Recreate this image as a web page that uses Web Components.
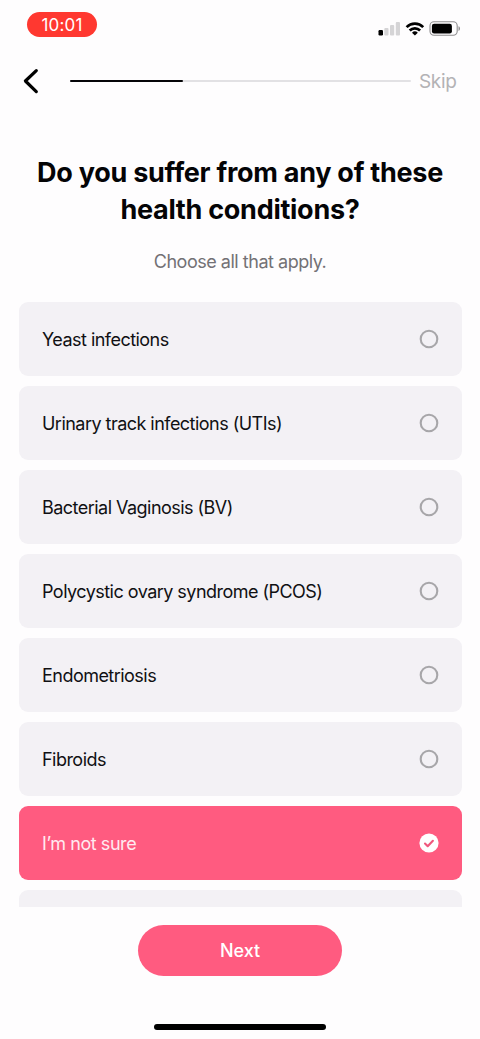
<!DOCTYPE html>
<html lang="en">
<head>
<meta charset="utf-8">
<title>Health conditions</title>
<style>
  html, body { margin: 0; height: 100%; background: #fefdfe; }
  body { font-family: Inter, "Liberation Sans", sans-serif; overflow: hidden; }
</style>
</head>
<body>
<quiz-screen></quiz-screen>
<script>
const define = (name, html) => {
  const template = document.createElement('template');
  template.innerHTML = html;
  customElements.define(name, class extends HTMLElement {
    connectedCallback() {
      if (this.shadowRoot) return;
      this.attachShadow({ mode: 'open' }).append(template.content.cloneNode(true));
    }
  });
};

define('status-bar', `
<style>
  :host { display: flex; justify-content: space-between; height: 56px; padding: 12px 19px 0 27px; box-sizing: border-box; }
  .time { width: 70px; height: 25px; border-radius: 13px; background: #ff3830; color: #fff;
    font-size: 17px; line-height: 26px; text-align: center; font-weight: 400; letter-spacing: 0.2px; }
  svg { display: block; margin-top: 8px; }
</style>
<div class="time">10:01</div>
<svg width="83" height="18" viewBox="378 20 83 18">
  <rect x="378.5" y="30" width="4.5" height="5.5" rx="1.2" fill="#000"/>
  <g fill="#d5d4d6">
    <rect x="384.3" y="28" width="4.2" height="7.5" rx="1"/>
    <rect x="390" y="25" width="4.2" height="10.5" rx="1"/>
    <rect x="395.8" y="22" width="4.2" height="13.5" rx="1"/>
  </g>
  <g fill="none" stroke="#000" stroke-width="2.7">
    <path d="M406.6 27.1a11.8 11.8 0 0 1 16.6 0"/>
    <path d="M409.7 30.5a7.4 7.4 0 0 1 10.4 0"/>
  </g>
  <path d="M414.9 35.6l-2.9-2.9a4.2 4.2 0 0 1 5.8 0z" fill="#000"/>
  <rect x="430" y="21.8" width="27.2" height="13.4" rx="4" fill="none" stroke="#8e8d8f" stroke-width="1.1"/>
  <rect x="431.9" y="23.7" width="20" height="9.8" rx="2.2" fill="#000"/>
  <path d="M458.5 26.3c2 .7 2 3.8 0 4.6z" fill="#8e8d8f"/>
</svg>`);

define('quiz-nav', `
<style>
  :host { display: flex; align-items: center; height: 50px; padding: 0 24px 0 22px; box-sizing: border-box; }
  svg { flex: none; width: 18px; height: 28px; }
  .track { flex: none; width: 341px; height: 2px; margin: 0 8.5px 0 29.5px; border-radius: 1px; background: #e2e1e4; }
  .fill { width: 113px; height: 2px; border-radius: 1px; background: #050508; }
  .skip { font-size: 19px; line-height: 24px; padding-top: 2px; color: #b3b2b5; letter-spacing: -0.35px; white-space: nowrap; }
</style>
<svg viewBox="0 0 18 28"><path d="M14.3 3.6L3.4 14l10.9 10.6" fill="none" stroke="#000" stroke-width="3.2" stroke-linecap="round" stroke-linejoin="round"/></svg>
<div class="track"><div class="fill"></div></div>
<span class="skip">Skip</span>`);

define('quiz-heading', `
<style>
  :host { display: block; height: 196px; padding-top: 48px; box-sizing: border-box; text-align: center; }
  h1 { margin: 0; font-size: 27px; line-height: 37px; font-weight: 700; color: #040406; letter-spacing: -0.27px; }
  p { margin: 22px 0 0; font-size: 18px; line-height: 24px; color: #737175; letter-spacing: -0.48px; }
  span { display: block; white-space: nowrap; }
</style>
<h1><span>Do you suffer from any of these</span><span>health conditions?</span></h1>
<p>Choose all that apply.</p>`);

define('choice-row', `
<style>
  :host { display: flex; flex: none; align-items: center; justify-content: space-between; height: 74px;
    padding: 0 22.5px 0 23.5px; box-sizing: border-box; border-radius: 9px; background: #f3f1f5; color: #101013;
    font-size: 18px; line-height: 24px; letter-spacing: -0.53px; }
  :host([selected]) { background: #ff5b80; color: #ffeaf0; letter-spacing: -0.44px; }
  span { white-space: nowrap; padding-top: 2px; }
  svg { display: block; width: 20px; height: 20px; }
  .on, :host([selected]) .off { display: none; }
  :host([selected]) .on { display: block; }
</style>
<span><slot></slot></span>
<svg class="off" viewBox="0 0 20 20"><circle cx="10" cy="10" r="8.3" fill="none" stroke="#a7a6a9" stroke-width="2.1"/></svg>
<svg class="on" viewBox="0 0 20 20"><circle cx="10" cy="10" r="9.6" fill="#fff"/><path d="M6 10.5l2.7 2.7 5.2-5.4" fill="none" stroke="#f0587d" stroke-width="2.1" stroke-linecap="round" stroke-linejoin="round"/></svg>`);

define('choice-list', `
<style>
  :host { display: flex; flex-direction: column; gap: 10px; height: 605px; padding: 0.3px 18.5px 0; box-sizing: border-box; overflow: hidden; }
</style>
<slot></slot>`);

define('next-button', `
<style>
  :host { display: block; margin: 18px auto 0; width: 204px; }
  button { display: block; width: 100%; height: 51px; padding: 1px 0 0; border: 0; border-radius: 26px; background: #ff5b80; color: #fff;
    font: 500 18px/50px Inter, "Liberation Sans", sans-serif; letter-spacing: -0.1px; }
</style>
<button><slot></slot></button>`);

define('home-indicator', `
<style>:host { display: block; width: 172px; height: 6px; margin: 48px auto 0; border-radius: 3px; background: #000; }</style>`);

define('quiz-screen', `
<style>
  :host { display: flex; flex-direction: column; width: 480px; height: 1039px; overflow: hidden; background: #fefdfe; }
</style>
<status-bar></status-bar>
<quiz-nav></quiz-nav>
<quiz-heading></quiz-heading>
<choice-list>
  <choice-row>Yeast infections</choice-row>
  <choice-row>Urinary track infections (UTIs)</choice-row>
  <choice-row>Bacterial Vaginosis (BV)</choice-row>
  <choice-row>Polycystic ovary syndrome (PCOS)</choice-row>
  <choice-row>Endometriosis</choice-row>
  <choice-row>Fibroids</choice-row>
  <choice-row selected>I’m not sure</choice-row>
  <choice-row></choice-row>
</choice-list>
<next-button>Next</next-button>
<home-indicator></home-indicator>`);
</script>
</body>
</html>
